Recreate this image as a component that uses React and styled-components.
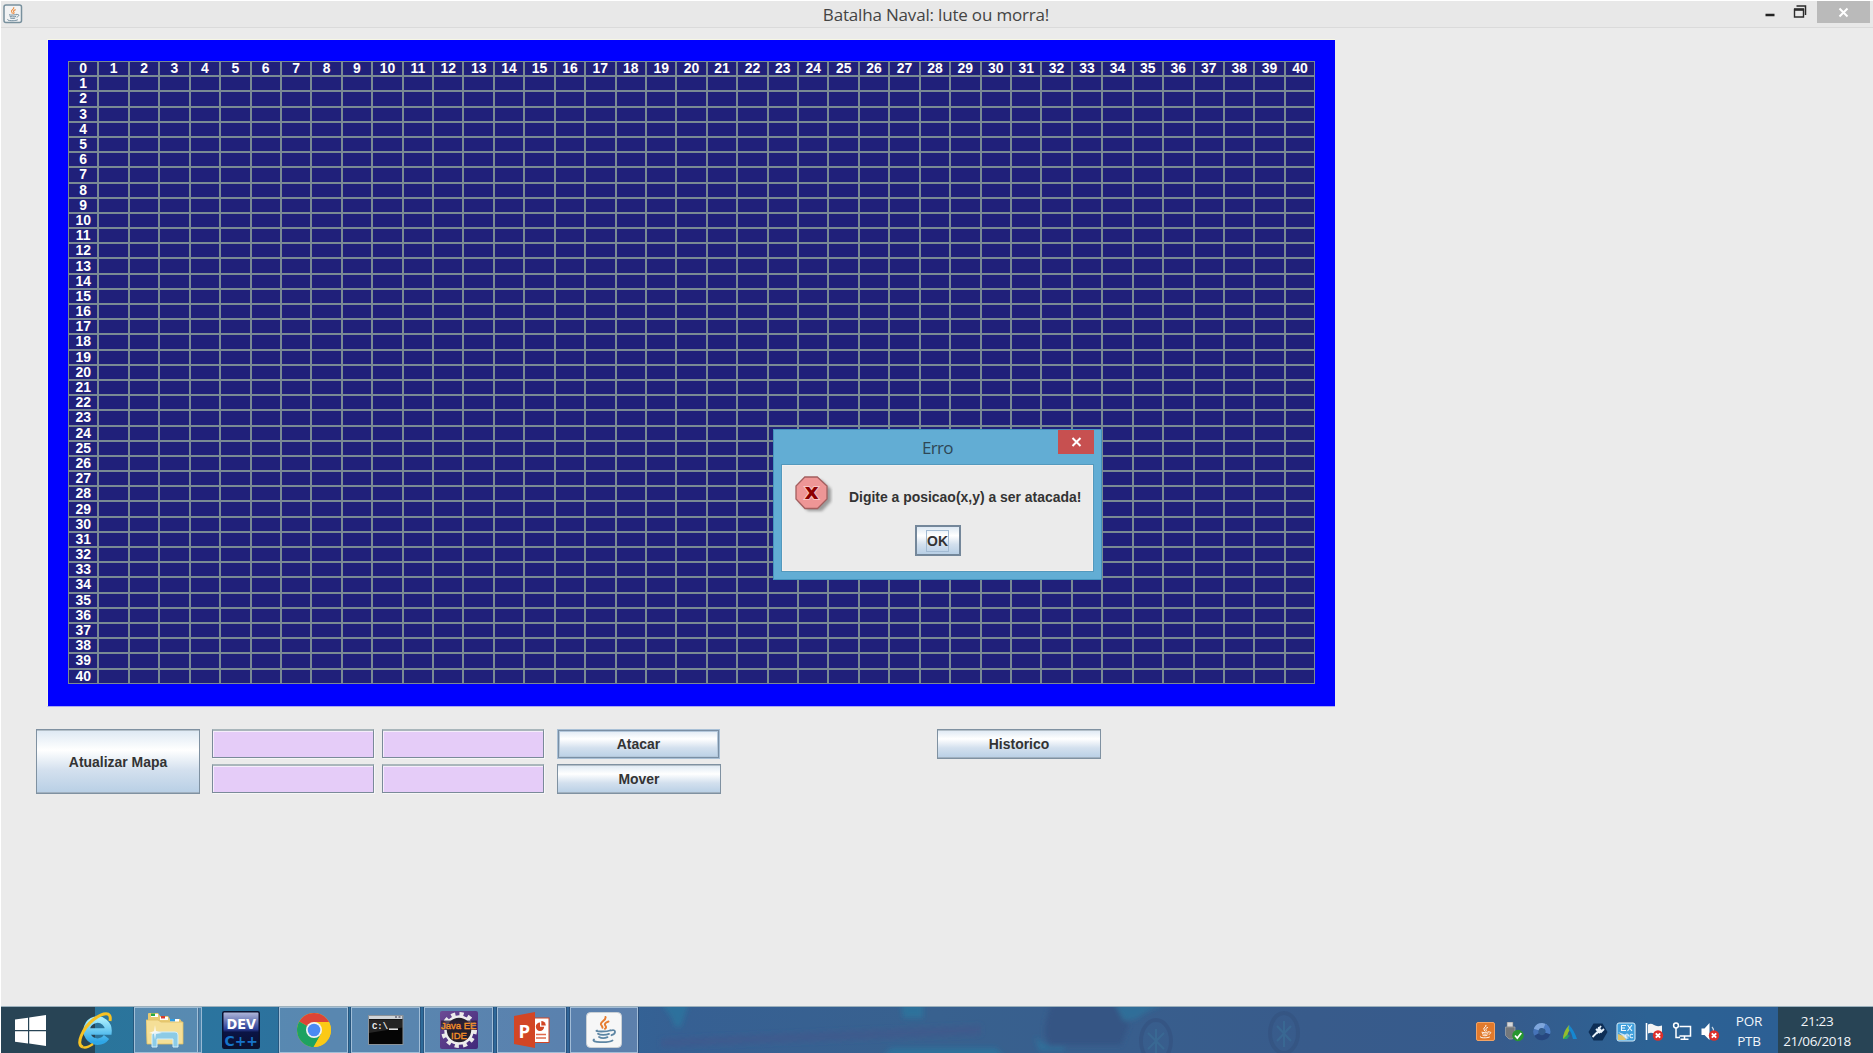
import React from "react";
import styled, { createGlobalStyle, css } from "styled-components";

const Global = createGlobalStyle`
  * { box-sizing: border-box; }
  html, body { margin: 0; padding: 0; overflow: hidden; background: #fff; }
  button, input { font: inherit; }
`;

const swing = css`
  font-family: "Liberation Sans", Arial, sans-serif;
  font-weight: 700;
  font-size: 13.95px;
  color: #333;
`;

const Desktop = styled.div`
  width: 1873px;
  height: 1053px;
  padding: 1px 0 0 1px;
  background: #fff;
  display: flex;
  flex-direction: column;
`;

const TitleBar = styled.header`
  flex: none;
  height: 27px;
  display: flex;
  align-items: flex-start;
  background: #e8e8e8;
  border-bottom: 1px solid #dadada;
  padding-left: 2px;
`;

const AppIcon = styled.div`
  width: 20px;
  height: 20px;
  margin-top: 3px;
  svg { display: block; }
`;

const Title = styled.h1`
  flex: 1;
  margin: 0 0 0 85px;
  text-align: center;
  font: 400 17px/28px "Open Sans", "Noto Sans", sans-serif;
  letter-spacing: ${(p) => p.$track}px;
  color: #444;
`;

const Caption = styled.div`
  display: flex;
  align-items: flex-start;
  padding-right: 3px;
  svg { display: block; }
`;

const CloseBox = styled.button`
  border: 0;
  padding: 0;
  width: 53px;
  height: 22px;
  background: #bababa;
  svg { display: block; }
`;

const Frame = styled.main`
  flex: 1;
  background: #ebebeb;
  display: flex;
  flex-direction: column;
  align-items: flex-start;
`;

const Sea = styled.section`
  margin: 11px 0 0 46px;
  width: 1288px;
  height: 668px;
  background: #0000ff;
  border-top: 1px solid #f6f6e4;
  border-left: 1px solid #f6f6e4;
  border-bottom: 1px solid #a8a8f2;
  padding: 21px 0 0 20px;
`;

const Board = styled.div`
  display: grid;
  width: 1247.2px;
  height: 623.2px;
  grid-template-columns: repeat(41, 1fr);
  grid-template-rows: repeat(41, 15.2px);
  background: #7a8a99;
`;

const Cell = styled.div`
  border: 1px solid #7a8a94;
  background: #20207a;
  ${swing}
  color: #fff;
  display: flex;
  align-items: center;
  justify-content: center;
  line-height: 13px;
`;

const Controls = styled.section`
  display: flex;
  align-items: flex-start;
  margin: 22px 0 0 35px;
`;

const Fields = styled.div`
  display: grid;
  grid-template-columns: 162px 162px;
  grid-template-rows: 29px 29px;
  gap: 6px 8px;
  margin-left: 12px;
`;

const Field = styled.input`
  width: 100%;
  height: 100%;
  padding: 0 4px;
  outline: 0;
  border: 1px solid #7a8a99;
  border-top: 2px solid #a9b6bb;
  border-radius: 0;
  background: #e5ccf8;
  box-shadow: inset 1px 1px 0 #f5edfb, 1px 1px 0 #f7f7f7;
`;

const Stack = styled.div`
  display: flex;
  flex-direction: column;
  gap: 5px;
  margin-left: ${(p) => p.$left}px;
`;

const Button = styled.button`
  ${swing}
  width: ${(p) => p.$w}px;
  height: ${(p) => p.$h}px;
  padding: 0;
  border: 1px solid ${(p) => (p.$ring ? "#a9c0d6" : "#7f91a1")};
  border-radius: 0;
  background: linear-gradient(#dde8f3 0%, #fdfefe 30%, #ffffff 32%, #d3e0ee 64%, #b8cfe5 100%);
  box-shadow: ${(p) =>
    p.$ring ? "inset 0 0 0 1px #7a8fa4, inset 0 0 0 2px #b4c8db" : "inset 0 1px 0 #b3bfc8, inset 0 -1px 0 #a0b0bf"};
`;

const DialogBox = styled.div`
  position: absolute;
  left: 773px;
  top: 429px;
  width: 329px;
  height: 151px;
  background: #62add4;
  border: 1px solid #4493bd;
  padding: 0 7px 7px;
  display: flex;
  flex-direction: column;
`;

const DialogHead = styled.div`
  flex: none;
  height: 34px;
  display: flex;
  justify-content: flex-end;
`;

const DialogTitle = styled.h2`
  flex: 1;
  margin: 0 0 0 36px;
  text-align: center;
  font: 400 17px/35px "Open Sans", "Noto Sans", sans-serif;
  letter-spacing: -0.7px;
  color: #2e4756;
`;

const DialogClose = styled.button`
  border: 0;
  padding: 0;
  width: 36px;
  height: 24px;
  background: #c75050;
  svg { display: block; }
`;

const DialogBody = styled.div`
  flex: 1;
  background: #ebebeb;
  border: 1px solid #5499bd;
  box-shadow: inset 0 0 0 1px #f4f0ee;
  display: flex;
  flex-direction: column;
  align-items: center;
`;

const Message = styled.div`
  ${swing}
  display: flex;
  align-self: stretch;
  padding: 11px 0 0 13px;
  height: 60px;
  svg { flex: 0 0 38px; }
  span { margin-left: 16px; line-height: 42px; white-space: nowrap; }
`;

const OkButton = styled(Button)`
  border: 2px solid #74879a;
  box-shadow: none;
  display: flex;
  align-items: center;
  justify-content: center;
  span { border: 1px solid #a3bbd3; line-height: 20px; height: 22px; padding: 0; width: 23px; }
`;

const Taskbar = styled.footer`
  position: relative;
  flex: 0 0 47px;
  display: flex;
  border-top: 1px solid #9db1bd;
  background: #386495;
  overflow: hidden;
`;

const Wallpaper = styled.svg`
  position: absolute;
  inset: 0;
`;

const Items = styled.nav`
  position: relative;
  display: flex;
  flex: 1;
`;

const Slot = styled.div`
  width: ${(p) => p.$w}px;
  margin-left: ${(p) => p.$left || 0}px;
  padding-right: ${(p) => p.$inset || 0}px;
  display: flex;
  align-items: center;
  justify-content: center;
  background: ${(p) => (p.$dark ? "#284455" : "transparent")};
  ${(p) =>
    p.$open &&
    css`
      background: rgba(150, 170, 205, 0.42);
      border: 1px solid rgba(185, 208, 228, 0.75);
      outline: 1px solid rgba(30, 55, 90, 0.45);
      outline-offset: 0;
    `}
  svg { display: block; flex: none; }
`;

const StackEdge = styled.div`
  width: 4px;
  background: rgba(150, 170, 205, 0.3);
  border: 1px solid rgba(185, 208, 228, 0.7);
  border-left: 0;
`;

const Tray = styled.div`
  position: relative;
  display: flex;
  align-items: center;
  padding-top: 3px;
  gap: 8px;
  svg { display: block; }
`;

const Info = styled.div`
  position: relative;
  width: ${(p) => p.$w}px;
  padding: ${(p) => p.$pad};
  background: ${(p) => (p.$dark ? "#284455" : "transparent")};
  color: #f2f6fa;
  text-align: center;
  font: 400 13.5px/20px "Open Sans", "Noto Sans", sans-serif;
  letter-spacing: ${(p) => p.$track}px;
`;

const Cup = ({ steam, body }) => (
  <g fill="none" strokeLinecap="round">
    <g stroke={steam} strokeWidth="2">
      <path d="M19.5 5c1 3.500-5.500 4.500-4.500 7.500.4 1 1.500 1.800 1.500 3.300" />
      <path d="M22.500 9.500c-3.500 1.300-4.500 2.600-3 4.300 1 1.200.5 2.200-.5 3" />
    </g>
    <g stroke={body} strokeWidth="1.800">
      <path d="M11 18.500c-3.500 1.200 10 1.500 13.500-.3M12 21.700c2 1.500 8 1.500 11 .2M13 25c2 1.200 6 1.200 8.500.2M8 27.500c-4 3 14 3.600 18.500 1M25 18.500c5-1.800 5.500 3 .5 4.700" />
    </g>
  </g>
);

const Badge = ({ x, y }) => (
  <g>
    <circle cx={x} cy={y} r="5.200" fill="#dc2f2b" />
    <path d={`M${x - 2.2} ${y - 2.2}l4.400 4.400m0-4.400l-4.400 4.400`} stroke="#fff" strokeWidth="1.900" />
  </g>
);

const openPrograms = [
  {
    id: "chrome",
    left: 19,
    w: 69,
    icon: (
      <svg width="36" height="36" viewBox="0 0 36 36">
        <circle cx="18" cy="18" r="17" fill="#fbc916" />
        <path d="M18 18L3.300 9.500A17 17 0 0 1 32.700 9.500L33 10H18z" fill="#dc4437" />
        <path d="M3.300 9.500A17 17 0 0 0 18 35l7-13-7-4z" fill="#1da261" />
        <path d="M33 10A17 17 0 0 1 17.500 35L25 22l0-12z" fill="#fbc916" />
        <circle cx="18" cy="18" r="8" fill="#f3f3f3" />
        <circle cx="18" cy="18" r="6.300" fill="#4a8af4" />
      </svg>
    ),
  },
  {
    id: "cmd",
    left: 3,
    w: 69,
    icon: (
      <svg width="36" height="30" viewBox="0 0 36 30">
        <rect x=".5" y=".5" width="34.500" height="29" fill="#050505" stroke="#8a9299" />
        <rect x="1" y="1" width="33.500" height="3" fill="#d0d4d8" />
        <path d="M27 2h2m1.500 0h2" stroke="#667" strokeWidth="1.500" />
        <path d="M1 4.500h33.500v8L1 18z" fill="#fff" opacity=".13" />
        <text x="4" y="14" fontFamily="Liberation Mono, monospace" fontWeight="700" fontSize="9.500" fill="#eee" textLength="16" lengthAdjust="spacingAndGlyphs">C:\</text>
        <path d="M21 14.200h9" stroke="#eee" strokeWidth="1.500" />
      </svg>
    ),
  },
  {
    id: "eclipse",
    left: 4,
    w: 69,
    icon: (
      <svg width="38" height="38" viewBox="0 0 38 38">
        <defs>
          <linearGradient id="jee" x1="0" y1="0" x2="1" y2="1">
            <stop offset="0" stopColor="#6c4a94" />
            <stop offset="1" stopColor="#40287a" />
          </linearGradient>
        </defs>
        <rect width="38" height="38" rx="2" fill="url(#jee)" />
        <circle cx="19" cy="19" r="16" fill="none" stroke="#e9e9e9" strokeWidth="4" strokeDasharray="4.200 4.178" />
        <circle cx="19" cy="19" r="13.500" fill="#24202c" stroke="#eee" strokeWidth="2.500" />
        <path d="M1 9.500h36v9.500H1z" fill="#2c2038" opacity=".8" />
        <g fontFamily="Liberation Sans, sans-serif" fontSize="9.500" fill="#f59028" stroke="#f59028" strokeWidth=".35">
          <text x="1" y="17.800">Java EE</text>
          <text x="11" y="27.500">IDE</text>
        </g>
      </svg>
    ),
  },
  {
    id: "powerpoint",
    left: 4,
    w: 69,
    icon: (
      <svg width="36" height="36" viewBox="0 0 36 36">
        <rect x="18" y="6" width="17" height="24.500" fill="#fff" stroke="#d24625" />
        <path d="M26 10.500a4.200 4.200 0 1 0 4.200 4.200H26z" fill="#d24625" />
        <path d="M27.300 9a4.500 4.500 0 0 1 4.500 4.500h-4.500z" fill="#d24625" />
        <path d="M22 22.500h10M22 26h10" stroke="#e0694c" strokeWidth="1.400" />
        <path d="M0 4L21 0v36L0 32z" fill="#d24625" />
        <text x="4.500" y="25.500" fontFamily="Open Sans, sans-serif" fontWeight="700" fontSize="18.500" fill="#fff">P</text>
      </svg>
    ),
  },
  {
    id: "java",
    left: 4,
    w: 68,
    icon: (
      <svg width="36" height="36" viewBox="0 0 36 36">
        <rect x=".5" y=".5" width="35" height="35" rx="4" fill="#f6f7f7" stroke="#c9d0d5" />
        <Cup steam="#e77c2f" body="#5d86a4" />
      </svg>
    ),
  },
];

const WindowsLogo = () => (
  <svg width="32" height="31" viewBox="0 0 32 31" fill="#fff">
    <path d="M0 4.500L13 2.700V15H0zM14.200 2.500L31 0v15H14.200zM0 16.200h13v12.300L0 26.700zM14.200 16.200H31V31l-16.800-2.400z" />
  </svg>
);

const Explorer = () => (
  <svg width="36" height="37" viewBox="0 0 36 37">
    <defs>
      <linearGradient id="ie" x1="0" y1="0" x2="0" y2="1">
        <stop offset="0" stopColor="#a5ecfc" />
        <stop offset="1" stopColor="#2fa6e6" />
      </linearGradient>
    </defs>
    <path d="M28.500 25a11 11 0 1 1 2-5.500H11" fill="none" stroke="url(#ie)" strokeWidth="6.500" />
    <path d="M5 35C-3 33 5 16 15 8S34-1 32 9" fill="none" stroke="#f6c224" strokeWidth="3" />
    <path d="M5 35c3 1.500 7-1 10-3" fill="none" stroke="#f6c224" strokeWidth="2.500" />
  </svg>
);

const Folder = () => (
  <svg width="38" height="36" viewBox="0 0 38 36">
    <path d="M2 2q0-1 1-1h9l2 3h8l2 3h10l2 3v22H2z" fill="#e8ca72" />
    <path d="M5 2h7v3H5zM14 5h8v3h-8zM24 7h9v3h-9z" fill="#fff" />
    <path d="M5 1.500h4v2.500H5z" fill="#26a944" />
    <path d="M15 4h4v2.500h-4z" fill="#d63a2f" />
    <path d="M24 7h5v2.500h-5z" fill="#2e9be0" />
    <path d="M0 8h12l3 2h22v22H1z" fill="#f5df97" stroke="#e0bf66" strokeWidth=".8" />
    <path d="M6 35V23q0-3 3-3h20q3 0 3 3v12h-5v-8H11v8z" fill="#8ccbe6" stroke="#d2eefa" strokeWidth="1" />
    <path d="M9 13l1 6 6 2-6 1-1 6-1-6-5-1 5-2z" fill="#fff" opacity=".75" />
  </svg>
);

const DevCpp = () => (
  <svg width="38" height="38" viewBox="0 0 38 38">
    <defs>
      <linearGradient id="dev" x1="0" y1="0" x2="0" y2="1">
        <stop offset="0" stopColor="#b4bbdc" />
        <stop offset=".48" stopColor="#2c3f98" />
        <stop offset=".56" stopColor="#0b1445" />
        <stop offset="1" stopColor="#09102f" />
      </linearGradient>
    </defs>
    <rect x=".75" y=".75" width="36.500" height="36.500" rx="1.500" fill="url(#dev)" stroke="#0b1230" strokeWidth="1.500" />
    <text x="4.500" y="17.500" fontFamily="DejaVu Sans, sans-serif" fontWeight="700" fontSize="14" fill="#fff" textLength="29.500" lengthAdjust="spacingAndGlyphs">DEV</text>
    <text x="2.500" y="34.500" fontFamily="DejaVu Sans, sans-serif" fontWeight="700" fontSize="14" fill="#1674c8" textLength="33.500" lengthAdjust="spacingAndGlyphs">C++</text>
  </svg>
);

const TrayIcons = () => (
  <>
    <svg width="20" height="20" viewBox="0 0 20 20">
      <rect x=".5" y=".5" width="18" height="18" rx="1.500" fill="#e27a2c" stroke="#f0a468" />
      <g transform="translate(.3 .8) scale(.5)">
        <Cup steam="#fff" body="#fff" />
      </g>
    </svg>
    <svg width="20" height="20" viewBox="0 0 20 20">
      <path d="M3 0h6v5H3z" fill="#d6d8da" stroke="#777" strokeWidth=".6" />
      <path d="M1.500 5h9.500v8L8.500 17H5l-3.500-3.500z" fill="#74787c" stroke="#a6a8aa" strokeWidth=".7" />
      <circle cx="14" cy="13.500" r="5.700" fill="#27962f" />
      <path d="M11 13.500l2.300 2.500 4-5" fill="none" stroke="#fff" strokeWidth="1.800" />
    </svg>
    <svg width="20" height="20" viewBox="0 0 20 20" fill="none" strokeWidth="5">
      <path d="M5.200 13.500A6 6 0 0 1 5 6.200" stroke="#4673b8" />
      <path d="M4.200 7.500A6.200 6.200 0 0 1 13.500 4.500" stroke="#7ea6dc" />
      <path d="M12.500 4A6.200 6.200 0 0 1 15.500 12" stroke="#4c7dc4" />
      <path d="M15.800 11.500A6.200 6.200 0 0 1 4.500 12.500" stroke="#27477f" />
    </svg>
    <svg width="20" height="20" viewBox="0 0 20 20">
      <path d="M3 17Q3 10 9 3l1.500 4Q7 11 7 16z" fill="#93bd2d" />
      <path d="M9 3q5 5 8 14h-4Q11 9 8.500 7z" fill="#1687d0" />
      <path d="M3 17l4-4 3 .5L7 17z" fill="#26a269" />
    </svg>
    <svg width="20" height="20" viewBox="0 0 20 20">
      <path d="M5.500 1.500h9L19.500 10l-5 8.500h-9L.5 10z" fill="#0d2e56" />
      <path d="M4.500 15l5-5M8 7l4 4M10 5.500l4 4M8.500 11.500l4-4M13 4l-3 4 3 2 3-3" fill="none" stroke="#e6f1fa" strokeWidth="1.800" />
    </svg>
    <svg width="20" height="20" viewBox="0 0 20 20">
      <rect x="1" y="1" width="18" height="18" rx="2" fill="#3f9edb" stroke="#d9eefa" />
      <path d="M2 12l6 2 2 4H2z" fill="#f1c65c" opacity=".9" />
      <path d="M2 10l8 3 1 5-4-4z" fill="#f5f8fb" opacity=".8" />
      <path d="M5.500 3.500h4.500M5.500 6h3.500M5.500 8.500h4.500M5.500 3v6M11.500 3l4.500 6M16 3l-4.500 6" stroke="#f2f9fd" strokeWidth="1.100" />
      <path d="M9.500 14h3q0-2-1.500-2t-1.500 2 1.500 2h1.500M17 12.500q-3-1-3 1.500t3 1.500" stroke="#e6f4fb" fill="none" strokeWidth="1.100" />
    </svg>
    <svg width="20" height="20" viewBox="0 0 20 20">
      <path d="M2.500 1v17" stroke="#fff" strokeWidth="1.600" />
      <path d="M4 2.500q3-1.500 6 .5t8 .5V12q-5 1-8-.500t-6 0z" fill="#f4f4f4" />
      <Badge x={14} y={13.500} />
    </svg>
    <svg width="20" height="20" viewBox="0 0 20 20" fill="none" stroke="#fff" strokeWidth="1.500">
      <path d="M7.500 4.500H18.500v9.500H7.500M12.500 14V17M8.500 17.200h8M4 6v9.500h4" />
      <circle cx="4" cy="3.500" r="2.400" />
    </svg>
    <svg width="20" height="20" viewBox="0 0 20 20">
      <path d="M1.500 6.500h3l5-5.500v17L4.500 13h-3z" fill="#fff" />
      <path d="M12 5q1.800 2 1.500 4" stroke="#c8d6e4" strokeWidth="1.200" fill="none" />
      <Badge x={14} y={13.500} />
    </svg>
  </>
);

const numbers = Array.from({ length: 41 }, (_, i) => i);

export default function App() {
  return (
    <Desktop>
      <Global />
      <TitleBar>
        <AppIcon>
          <svg width="20" height="20" viewBox="0 0 20 20">
            <rect x="1" y="1" width="17.500" height="17.500" rx="2" fill="#f2f3f4" stroke="#78909d" strokeWidth="1.500" />
            <g transform="translate(.5 .8) scale(.53)">
              <Cup steam="#ec8a3c" body="#6b8799" />
            </g>
          </svg>
        </AppIcon>
        <Title $track={-0.18}>Batalha Naval: lute ou morra!</Title>
        <Caption>
          <svg width="53" height="24" viewBox="0 0 53 24">
            <path d="M1.500 14h9" stroke="#222" strokeWidth="2.500" />
            <g fill="none" stroke="#2b2b2b">
              <path d="M32.500 5H41.500v9" strokeWidth="1.500" />
              <path d="M30.500 8.500h9v7.500h-9z" strokeWidth="1.400" />
              <path d="M30 8.500h10" strokeWidth="2.500" />
            </g>
          </svg>
          <CloseBox aria-label="Fechar">
            <svg width="53" height="22" viewBox="0 0 53 22">
              <path d="M22.500 7.500l8 8m0-8l-8 8" stroke="#fff" strokeWidth="2" />
            </svg>
          </CloseBox>
        </Caption>
      </TitleBar>

      <Frame>
        <Sea>
          <Board>
            {numbers.map((row) =>
              numbers.map((col) => (
                <Cell key={`${row}-${col}`}>{row === 0 ? col : col === 0 ? row : null}</Cell>
              ))
            )}
          </Board>
        </Sea>
        <Controls>
          <Button $w={164} $h={65}>Atualizar Mapa</Button>
          <Fields>
            <Field aria-label="Ataque X" />
            <Field aria-label="Ataque Y" />
            <Field aria-label="Movimento X" />
            <Field aria-label="Movimento Y" />
          </Fields>
          <Stack $left={13}>
            <Button $w={163} $h={30} $ring>Atacar</Button>
            <Button $w={164} $h={30}>Mover</Button>
          </Stack>
          <Stack $left={216}>
            <Button $w={164} $h={30}>Historico</Button>
          </Stack>
        </Controls>
      </Frame>

      <Taskbar>
        <Wallpaper width="1872" height="46" viewBox="0 0 1872 46" preserveAspectRatio="none">
          <defs>
            <linearGradient id="sky">
              <stop offset="0" stopColor="#2a7598" />
              <stop offset=".12" stopColor="#2b749f" />
              <stop offset=".2" stopColor="#2e6d9a" />
              <stop offset=".3" stopColor="#2f6598" />
              <stop offset=".36" stopColor="#366093" />
              <stop offset=".5" stopColor="#38618f" />
              <stop offset=".7" stopColor="#385b8b" />
              <stop offset=".8" stopColor="#365b8c" />
              <stop offset=".88" stopColor="#2c6294" />
              <stop offset=".95" stopColor="#2c5f94" />
              <stop offset="1" stopColor="#27658e" />
            </linearGradient>
            <filter id="soft"><feGaussianBlur stdDeviation="2.500" /></filter>
          </defs>
          <rect width="1872" height="46" fill="url(#sky)" />
          <g filter="url(#soft)">
            <path d="M660 32L980 18v10L660 40z" fill="#42558b" opacity=".55" />
            <path d="M890 41h105l10 10H880zM900-4h22v15h-20zM660-4h28l-8 24h-6l-4-10z" fill="#2a7da4" opacity=".6" />
            <path d="M1050-3q-12 33 0 41h70l8-20-14-21z" fill="#355584" />
            <path d="M1114-3h50q-20 7-28 15l-14 2zM1034 30l14 10h15v4h-25z" fill="#2b7ba3" opacity=".55" />
          </g>
          <g fill="none" stroke="#34517f" strokeWidth="4" opacity=".6">
            <ellipse cx="1155" cy="34" rx="15" ry="21" />
            <ellipse cx="1283" cy="26" rx="14" ry="20" />
          </g>
          <g stroke="#3b7299" strokeWidth="2" opacity=".55">
            <path d="M1155 22v24M1147 26l16 16M1163 26l-16 16M1283 14v26M1276 19l14 15M1290 19l-14 15" />
          </g>
        </Wallpaper>
        <Items>
          <Slot $w={94} $inset={35} $dark><WindowsLogo /></Slot>
          <Slot $w={39} $inset={38}><Explorer /></Slot>
          <Slot $w={64} $inset={2} $open><Folder /></Slot>
          <StackEdge />
          <Slot $w={38} $left={20}><DevCpp /></Slot>
          {openPrograms.map((p) => (
            <Slot key={p.id} $w={p.w} $left={p.left} $open>{p.icon}</Slot>
          ))}
        </Items>
        <Tray><TrayIcons /></Tray>
        <Info $w={58} $pad="4px 0 0" $track={-0.2}>POR<br />PTB</Info>
        <Info $w={95} $pad="4px 17px 0 0" $track={-0.4} $dark>21:23<br />21/06/2018</Info>
      </Taskbar>

      <DialogBox role="alertdialog">
        <DialogHead>
          <DialogTitle>Erro</DialogTitle>
          <DialogClose aria-label="Fechar">
            <svg width="36" height="24" viewBox="0 0 36 24">
              <path d="M14.500 8l8 8m0-8l-8 8" stroke="#fff" strokeWidth="2" />
            </svg>
          </DialogClose>
        </DialogHead>
        <DialogBody>
          <Message>
            <svg width="38" height="38" viewBox="0 0 38 38">
              <defs><filter id="shade"><feGaussianBlur stdDeviation="1.500" /></filter></defs>
              <path d="M12.500 4h14L36 13v12.500L27 35H13L4 26V13z" fill="#777" opacity=".7" filter="url(#shade)" />
              <path d="M9.800 1h12.500L32 10v13l-9.500 9.500H10L1 23V10z" fill="#ee9696" stroke="#a35f5f" strokeWidth="1.300" />
              <text x="16.700" y="23" textAnchor="middle" fontFamily="DejaVu Sans, sans-serif" fontWeight="700" fontSize="22" fill="#8e0000" stroke="#f6c4c4" strokeWidth="2" paintOrder="stroke">x</text>
            </svg>
            <span>Digite a posicao(x,y) a ser atacada!</span>
          </Message>
          <OkButton $w={46} $h={31}><span>OK</span></OkButton>
        </DialogBody>
      </DialogBox>
    </Desktop>
  );
}
